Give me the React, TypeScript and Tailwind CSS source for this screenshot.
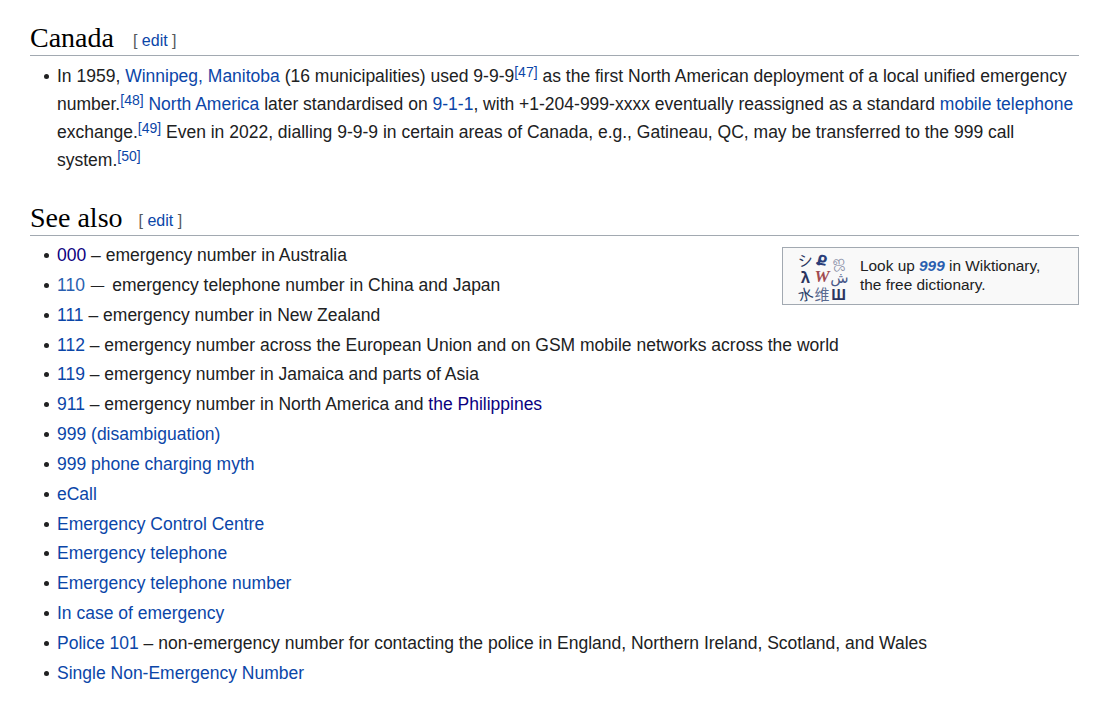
const sans = { fontFamily: '"Liberation Sans", Arial, sans-serif' };

function A({ children }: { children: React.ReactNode }) {
  return <a className="text-[#0b46a8]">{children}</a>;
}

function V({ children }: { children: React.ReactNode }) {
  return <a className="text-[#0b0080]">{children}</a>;
}

function Ref({ n }: { n: number }) {
  return <sup className="relative top-[-5px] text-[14px] leading-none text-[#0b46a8]">[{n}]</sup>;
}

function Heading({ title, gap }: { title: string; gap: string }) {
  return (
    <h2 className="flex h-[40px] items-end border-b border-[#a2a9b1]">
      <span className="relative top-[3px] font-['Liberation_Serif',Georgia,serif] text-[28px] leading-[40px] text-black">{title}</span>
      <span className={`${gap} mb-[4px] text-[16px] leading-[20px] text-[#54595d]`}>
        [ <A>edit</A> ]
      </span>
    </h2>
  );
}

const glyphs = [
  { g: "シ", c: "rotate-[-8deg] text-[#2b3560]" },
  { g: "Ք", c: "rotate-[12deg] font-bold text-[#2b3f7a]" },
  { g: "ஜ", c: "rotate-[-6deg] text-[#8a90a8]" },
  { g: "λ", c: "font-bold text-[#2b3560]" },
  { g: "W", c: "font-['Liberation_Serif',serif] text-[17px] font-bold italic text-[#a04a50]" },
  { g: "ش", c: "text-[#4a5a8a]" },
  { g: "水", c: "rotate-[-14deg] text-[#2b3f6a]" },
  { g: "维", c: "text-[#5a6a90]" },
  { g: "Ш", c: "font-bold text-[#2b3560]" },
];

function WiktLogo() {
  return (
    <div className="grid h-[50px] w-[50px] shrink-0 grid-cols-3 font-['Noto_Sans_CJK_SC','DejaVu_Sans',sans-serif] text-[15px] leading-[17px]">
      {glyphs.map((x, i) => (
        <span key={i} className={`text-center ${x.c}`}>
          {x.g}
        </span>
      ))}
    </div>
  );
}

function Item({ children }: { children: React.ReactNode }) {
  return (
    <li className="relative mb-[1.85px] before:absolute before:left-[-13px] before:top-[12px] before:size-[5px] before:rounded-full before:bg-[#202122]">
      {children}
    </li>
  );
}

export default function App() {
  return (
    <div className="h-[704px] w-[1103px] overflow-hidden bg-white pl-[30px] pr-[24px] pt-[16px] text-[17.5px] leading-[28px] text-[#202122]" style={sans}>
      <Heading title="Canada" gap="ml-[19px]" />
      <ul className="mt-[6px] pl-[27px]">
        <Item>
          In 1959, <A>Winnipeg, Manitoba</A> (16 municipalities) used 9-9-9<Ref n={47} /> as the first North American deployment of a local unified emergency number.<Ref n={48} /> <A>North America</A> later standardised on <A>9-1-1</A>, with +1-204-999-xxxx eventually reassigned as a standard <A>mobile telephone</A> exchange.<Ref n={49} /> Even in 2022, dialling 9-9-9 in certain areas of Canada, e.g., Gatineau, QC, may be transferred to the 999 call system.<Ref n={50} />
        </Item>
      </ul>
      <div className="mt-[22px]">
        <Heading title="See also" gap="ml-[16px]" />
      </div>
      <div className="float-right mt-[11px] flex h-[58px] w-[297px] items-center border border-[#a2a9b1] bg-[#f9f9f9] pl-[14px] text-[15.4px] leading-[19.5px]">
        <WiktLogo />
        <div className="mb-[2px] ml-[13px]">
          Look up <a className="font-bold italic text-[#2a5fb0]">999</a> in Wiktionary,
          <br />
          the free dictionary.
        </div>
      </div>
      <ul className="mt-[5px] pl-[27px]">
        <Item><V>000</V> – emergency number in Australia</Item>
        <Item><a className="text-[#2a5fb0]">110</a> <span className="relative top-[-1px] ml-[1px] text-[13.5px] leading-none">—</span> <span className="ml-[3px]">emergency telephone number in China and Japan</span></Item>
        <Item><A>111</A> – emergency number in New Zealand</Item>
        <Item><A>112</A> – emergency number across the European Union and on GSM mobile networks across the world</Item>
        <Item><A>119</A> – emergency number in Jamaica and parts of Asia</Item>
        <Item><A>911</A> – emergency number in North America and <V>the Philippines</V></Item>
        <Item><A>999 (disambiguation)</A></Item>
        <Item><A>999 phone charging myth</A></Item>
        <Item><A>eCall</A></Item>
        <Item><A>Emergency Control Centre</A></Item>
        <Item><A>Emergency telephone</A></Item>
        <Item><A>Emergency telephone number</A></Item>
        <Item><A>In case of emergency</A></Item>
        <Item><A>Police 101</A> – non-emergency number for contacting the police in England, Northern Ireland, Scotland, and Wales</Item>
        <Item><A>Single Non-Emergency Number</A></Item>
      </ul>
    </div>
  );
}
